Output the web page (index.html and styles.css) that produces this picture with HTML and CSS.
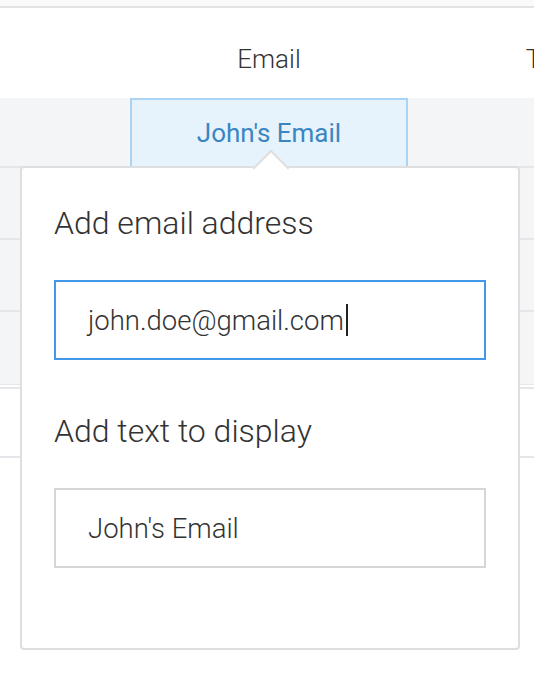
FILE: index.html
```html
<!DOCTYPE html>
<html lang="en">
<head>
  <meta charset="UTF-8">
  <meta name="viewport" content="width=device-width, initial-scale=1.0">
  <title>Email link editor</title>
  <link rel="stylesheet" href="styles.css">
</head>
<body>
  <div class="topbar"></div>
  <div class="sheet">
    <div class="row head">
      <div class="cell"></div>
      <div class="cell">Email</div>
      <div class="cell">Text</div>
    </div>
    <div class="row first">
      <div class="cell"></div>
      <div class="cell selected">John's Email</div>
      <div class="cell"></div>
    </div>
    <div class="row"><div class="cell"></div><div class="cell"></div><div class="cell"></div></div>
    <div class="row"><div class="cell"></div><div class="cell"></div><div class="cell"></div></div>
    <div class="row last-gray"><div class="cell"></div><div class="cell"></div><div class="cell"></div></div>
    <div class="row plain"><div class="cell"></div><div class="cell"></div><div class="cell"></div></div>

    <!-- link editor popover, opened from the selected cell -->
    <div class="popover">
      <div class="group">
        <label class="label">Add email address</label>
        <div class="field focused">john.doe@gmail.com<span class="caret"></span></div>
      </div>
      <div class="group">
        <label class="label">Add text to display</label>
        <div class="field">John's Email</div>
      </div>
    </div>
  </div>
</body>
</html>
```

FILE: styles.css
```css
/* Basic Reset */
* {
  margin: 0;
  padding: 0;
  box-sizing: border-box;
}
html {
  overflow-x: hidden;
}
body {
  font-family: Roboto, 'Liberation Sans', Arial, sans-serif;
  font-weight: 300;
  background: #fff;
  color: #333;
  min-height: 678px;
  overflow-x: hidden;
}
.topbar {
  height: 8px;
  background: #fafafa;
  border-bottom: 2px solid #e3e3e3;
}
.sheet {
  position: relative;
  width: 692px;
  height: 670px;
}
.row {
  display: grid;
  grid-template-columns: 130px 278px 284px;
  height: 72px;
  background: #f4f5f7;
  border-bottom: 2px solid #e5e6e9;
}
.row.head {
  height: 90px;
  background: #fff;
  border-bottom: none;
}
.row.first {
  height: 70px;
}
.row.last-gray {
  height: 73px;
  border-bottom: 1px solid #e5e6e9;
}
.row.plain {
  height: 71px;
  margin-top: 2px;
  background: #fff;
  border-top: 2px solid #e5e6e9;
}
.cell {
  display: flex;
  align-items: center;
  justify-content: center;
  font-size: 26px;
  white-space: nowrap;
}
.row.head .cell {
  padding-top: 12px;
}
.cell.selected {
  background: #e6f2fc;
  border: 2px solid #a9d4f6;
  color: #3a86c2;
  font-weight: 400;
  margin-bottom: -2px;
}
.popover {
  position: absolute;
  left: 20px;
  top: 158px;
  width: 500px;
  background: #fff;
  border: 2px solid #dedede;
  border-radius: 4px;
  padding: 36px 32px 80px;
  display: flex;
  flex-direction: column;
  gap: 52px;
}
.popover::before {
  content: "";
  position: absolute;
  top: -13px;
  left: 236px;
  width: 24px;
  height: 24px;
  background: #fff;
  border-top: 2px solid #dedede;
  border-left: 2px solid #dedede;
  transform: rotate(45deg);
}
.group {
  display: flex;
  flex-direction: column;
  gap: 38px;
}
.label {
  font-size: 32px;
  line-height: 38px;
  color: #333;
}
.field {
  height: 80px;
  border: 2px solid #d6d6d6;
  padding-left: 32px;
  display: flex;
  align-items: center;
  font-size: 27.5px;
  color: #333;
}
.field.focused {
  border-color: #4398ea;
}
.caret {
  display: inline-block;
  width: 2px;
  height: 32px;
  margin-left: 2px;
  background: #222;
}
```
